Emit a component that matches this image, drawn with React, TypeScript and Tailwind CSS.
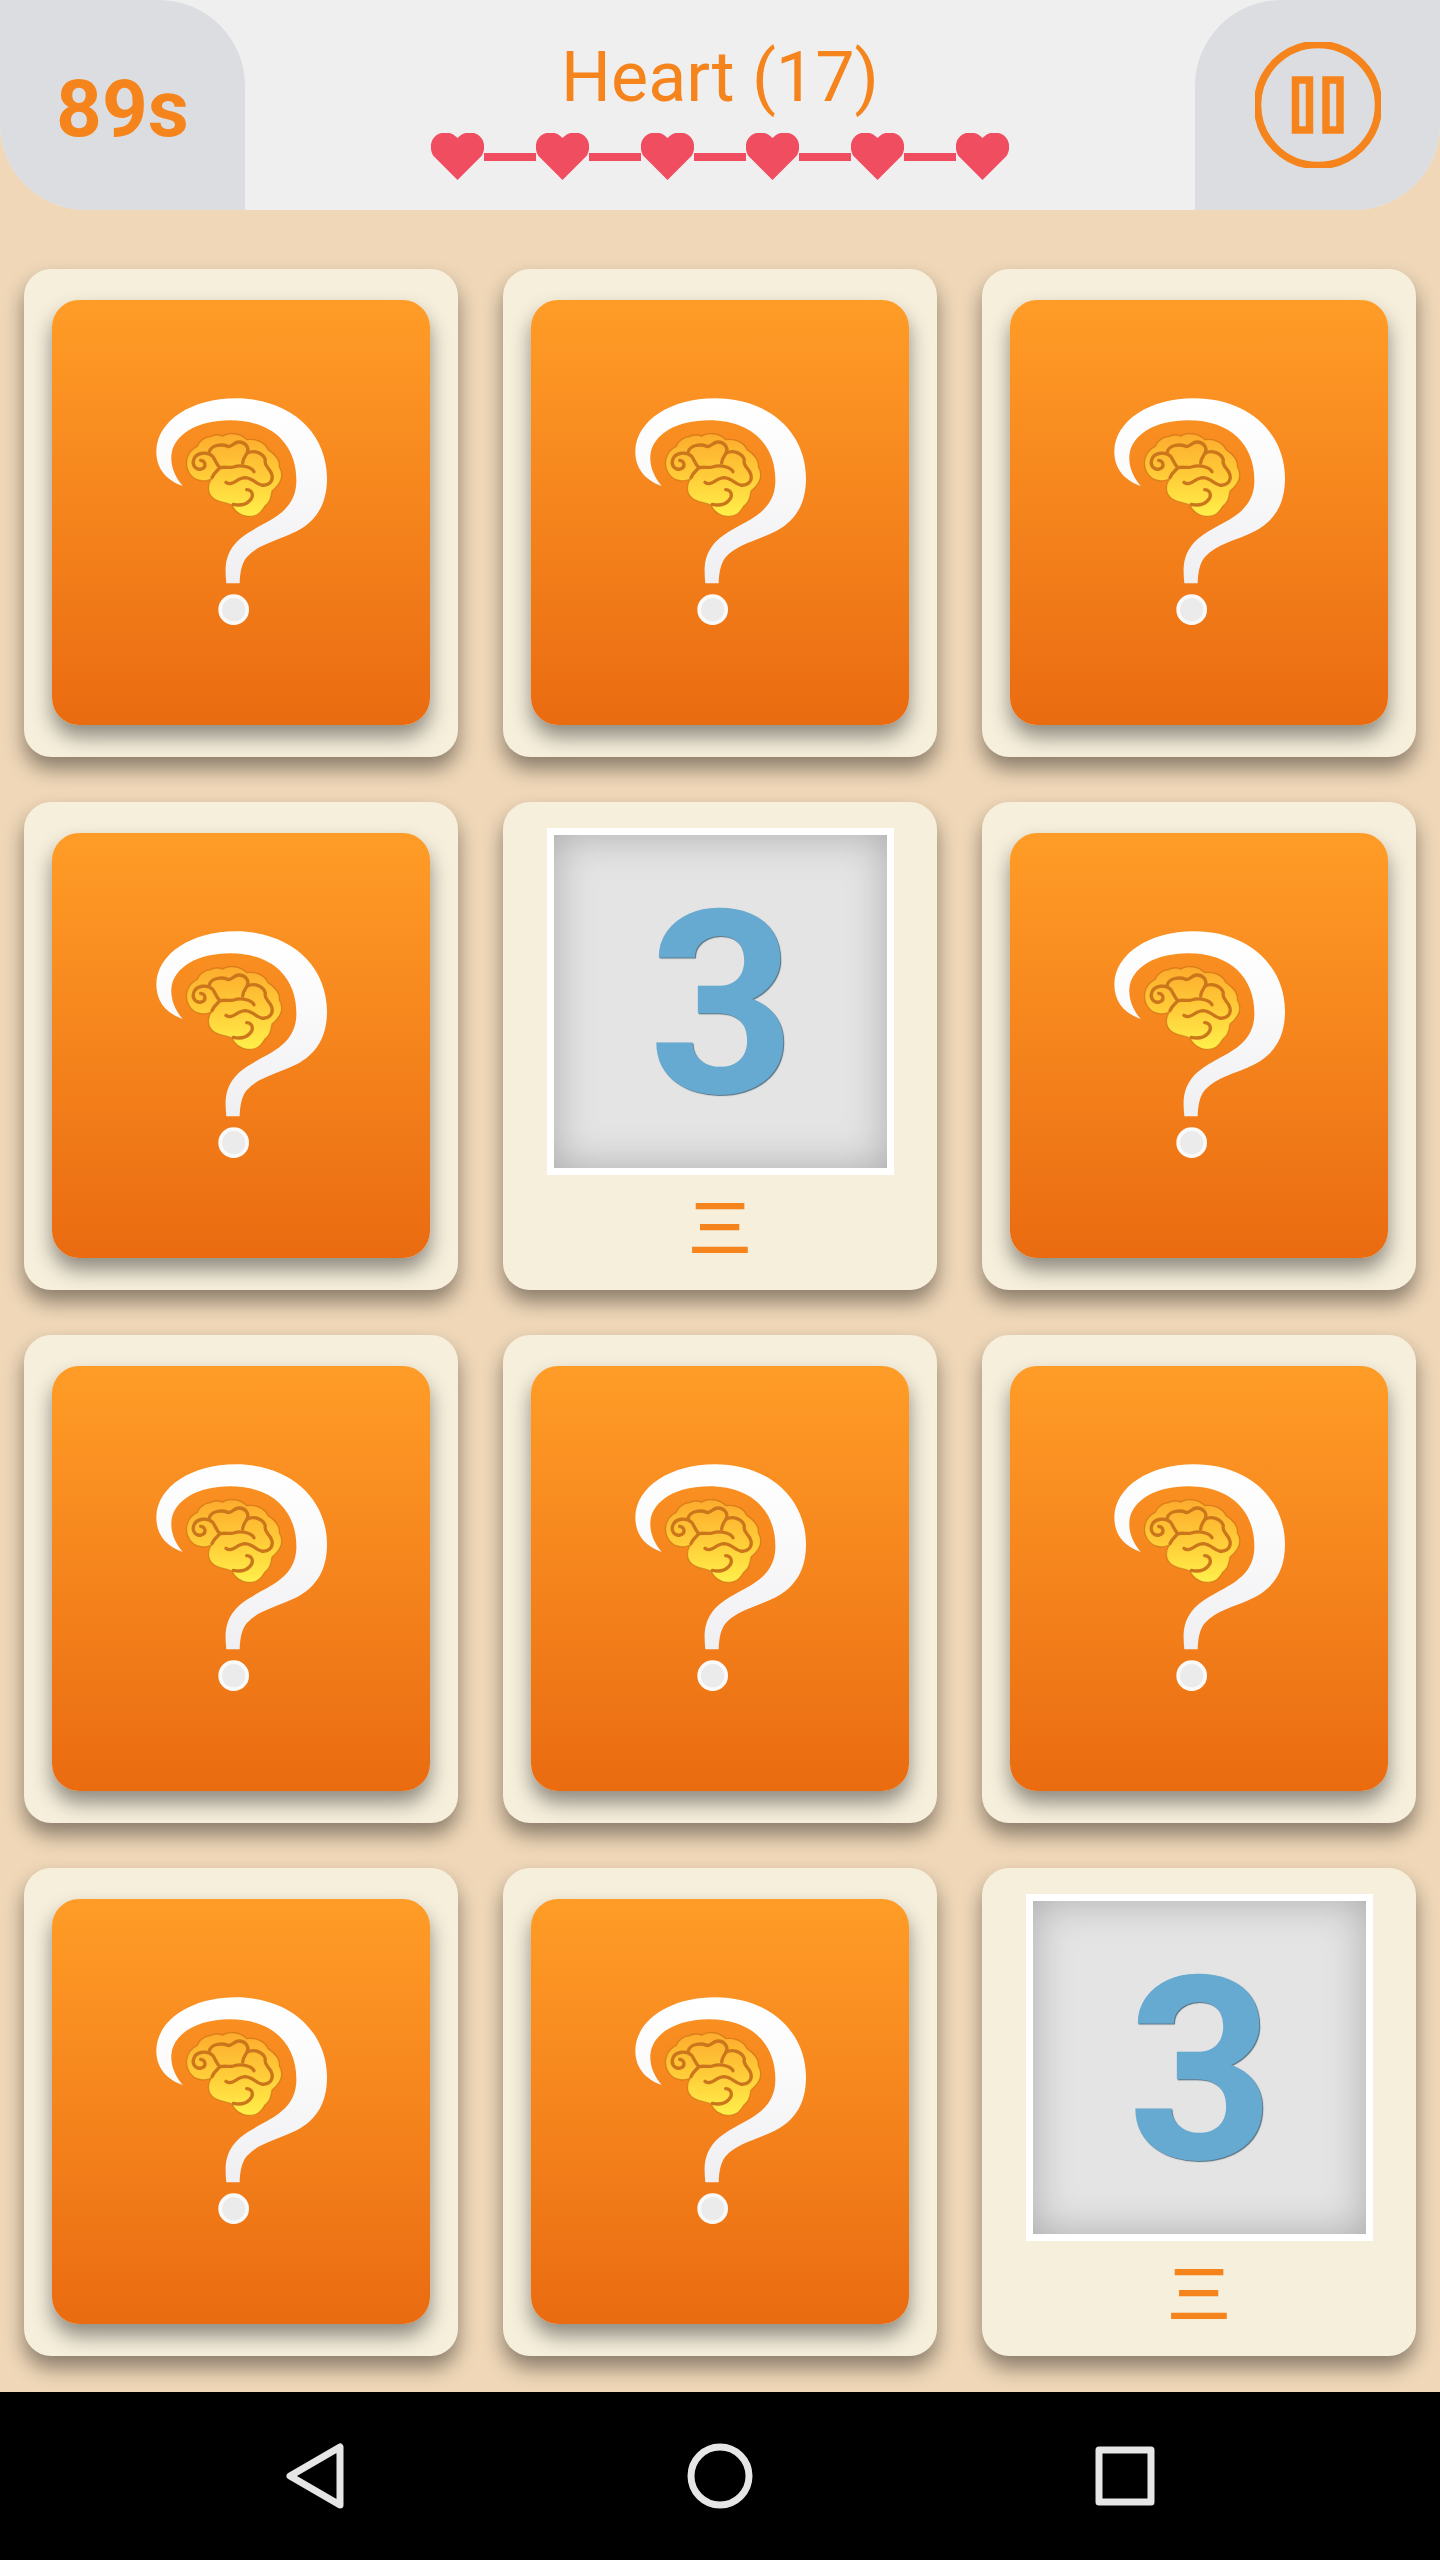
import React from "react";

const BOARD: boolean[] = [
  false, false, false,
  false, true, false,
  false, false, false,
  false, false, true,
];

function Heart() {
  return (
    <svg viewBox="0 0 53 47" className="h-[47px] w-[53px] shrink-0" fill="#f04e60" aria-hidden="true">
      <path d="M26.500 47L2.500 23C-1.500 17 -1 8 4 3.500C9 -1.500 18 -1.500 23 2L26.500 5L30 2C35 -1.500 44 -1.500 49 3.500C54 8 54.500 17 50.500 23Z" />
    </svg>
  );
}

function PauseIcon() {
  return (
    <svg viewBox="0 0 126 126" className="size-[126px]" fill="none" stroke="#f5841c" aria-hidden="true">
      <circle cx="63" cy="63" r="60.500" strokeWidth="7.500" />
      <path d="M40.500 38H54.500V88H40.500ZM71 38H85V88H71Z" strokeWidth="7.500" />
    </svg>
  );
}

function QuestionBrain() {
  return (
    <svg viewBox="3 7 660 840" className="h-[280px] w-[220px]" fill="none" aria-hidden="true">
      <defs>
        <linearGradient id="mark" x1="0" y1="80" x2="0" y2="770" gradientUnits="userSpaceOnUse">
          <stop offset="0" stopColor="#ffffff" />
          <stop offset="0.3" stopColor="#fbfbfc" />
          <stop offset="1" stopColor="#ebebee" />
        </linearGradient>
        <linearGradient id="brain" x1="0" y1="22" x2="0" y2="272" gradientUnits="userSpaceOnUse">
          <stop offset="0" stopColor="#fdab2d" />
          <stop offset="0.500" stopColor="#ffcb38" />
          <stop offset="1" stopColor="#fff04a" />
        </linearGradient>
      </defs>
      <path
        d="M158 346C105 328 78 290 79 240C82 150 185 83 318 83C480 83 590 185 591 322C591 400 560 450 500 482C440 512 385 520 350 560C334 580 330 608 329 638H289C285 598 285 568 302 538C322 502 360 482 410 455C465 425 497 392 499 335C502 225 430 149 300 149C205 149 130 190 124 255C122 292 138 322 158 346Z"
        fill="url(#mark)"
      />
      <circle cx="311" cy="717" r="46" fill="#fafafb" />
      <circle cx="311" cy="717" r="35" fill="#ebebec" />
      <g transform="translate(150 165)" strokeLinecap="round" strokeLinejoin="round">
        <path
          d="M52 62C58 44 76 34 92 33C98 27 120 26 128 32C142 20 180 20 200 42C228 38 254 50 264 72C288 88 300 108 298 124C310 144 308 170 276 196C272 222 268 230 254 242C240 266 226 274 204 272C182 270 164 256 156 238C136 230 110 228 98 216C84 204 80 182 94 160C70 172 42 164 28 142C12 118 18 78 52 62Z"
          fill="url(#brain)"
          stroke="#c66b12"
          strokeOpacity="0.6"
          strokeWidth="4"
        />
        <g stroke="#cc761c" strokeWidth="10">
          <path d="M62 104C78 106 80 126 64 130C46 134 36 118 41 102C48 80 82 76 98 92C106 102 108 116 120 126" />
          <path d="M96 156C102 142 110 136 120 126C138 122 146 128 160 124C172 120 190 120 202 124C214 128 220 134 222 138" />
          <path d="M88 78C94 58 124 54 144 62C154 66 160 50 176 49C196 48 208 66 202 80C198 90 190 94 188 112" />
          <path d="M202 82C222 72 250 82 256 102C250 124 272 126 276 148C280 168 264 182 244 178C228 174 218 158 196 156C170 156 158 184 138 170" />
          <path d="M200 192C220 194 222 214 208 226C196 238 178 240 160 236" />
        </g>
      </g>
    </svg>
  );
}

function HiddenCard() {
  return (
    <button
      type="button"
      aria-label="Hidden card"
      className="flex h-[425px] w-full items-center justify-center rounded-[27px] bg-linear-to-b from-[#ff9c27] to-[#ea6b10] shadow-[0_12px_20px_rgba(0,0,0,0.42)]"
    >
      <QuestionBrain />
    </button>
  );
}

function OpenCard() {
  return (
    <div className="flex flex-col items-center">
      <div className="flex size-[347px] items-center justify-center border-[7px] border-white bg-[#e4e4e4] pt-2 pl-1 text-[256px] leading-none font-bold text-[#66aad2] shadow-[inset_0_0_40px_rgba(0,0,0,0.25)] [text-shadow:1px_1px_1px_#56707f]">
        3
      </div>
      <div className="mt-3 text-[64px] leading-[72px] font-medium text-[#f5841c] [font-family:'Noto_Sans_CJK_SC',sans-serif]">三</div>
    </div>
  );
}

function NavIcon({ label, children }: { label: string; children: React.ReactNode }) {
  return (
    <button type="button" aria-label={label} className="flex items-center justify-center">
      <svg viewBox="0 0 66 66" className="size-[66px]" fill="none" stroke="#e6e6e6" strokeWidth="7" strokeLinejoin="round" aria-hidden="true">
        {children}
      </svg>
    </button>
  );
}

export default function App() {
  return (
    <div className="flex min-h-screen flex-col bg-[#efd7b8] [font-family:Roboto,sans-serif]">
      <header className="flex h-[210px] justify-between overflow-hidden rounded-b-[86px] bg-[#efefef] text-[#f5841c]">
        <div className="flex w-[245px] items-center justify-center rounded-tr-[86px] bg-[#dcdde0] pt-2 text-[80px] leading-none font-bold">
          89s
        </div>
        <div className="flex flex-col items-center pt-9">
          <h1 className="text-[70px] leading-[82px]">Heart (17)</h1>
          <div className="mt-[15px] flex items-center">
            {[0, 1, 2, 3, 4, 5].map((i) => (
              <React.Fragment key={i}>
                {i > 0 && <span className="h-2 w-[52px] bg-[#f04e60]" />}
                <Heart />
              </React.Fragment>
            ))}
          </div>
        </div>
        <button type="button" aria-label="Pause" className="flex w-[245px] items-center justify-center rounded-tl-[86px] bg-[#dcdde0]">
          <PauseIcon />
        </button>
      </header>

      <main className="grid flex-1 grid-cols-3 content-start gap-[45px] px-6 pt-[59px]">
        {BOARD.map((open, i) => (
          <div
            key={i}
            className={
              open
                ? "h-[488px] rounded-[27px] bg-[#f6efdc] pt-[26px] shadow-[0_12px_20px_rgba(0,0,0,0.42)]"
                : "h-[488px] rounded-[27px] bg-[#f6efdc] px-7 pt-[31px] shadow-[0_12px_20px_rgba(0,0,0,0.42)]"
            }
          >
            {open ? <OpenCard /> : <HiddenCard />}
          </div>
        ))}
      </main>

      <nav className="grid h-[168px] grid-cols-3 bg-black px-28">
        <NavIcon label="Back">
          <path d="M58 4V62L8 33Z" />
        </NavIcon>
        <NavIcon label="Home">
          <circle cx="33" cy="33" r="29" />
        </NavIcon>
        <NavIcon label="Recent apps">
          <rect x="7" y="7" width="52" height="52" />
        </NavIcon>
      </nav>
    </div>
  );
}
